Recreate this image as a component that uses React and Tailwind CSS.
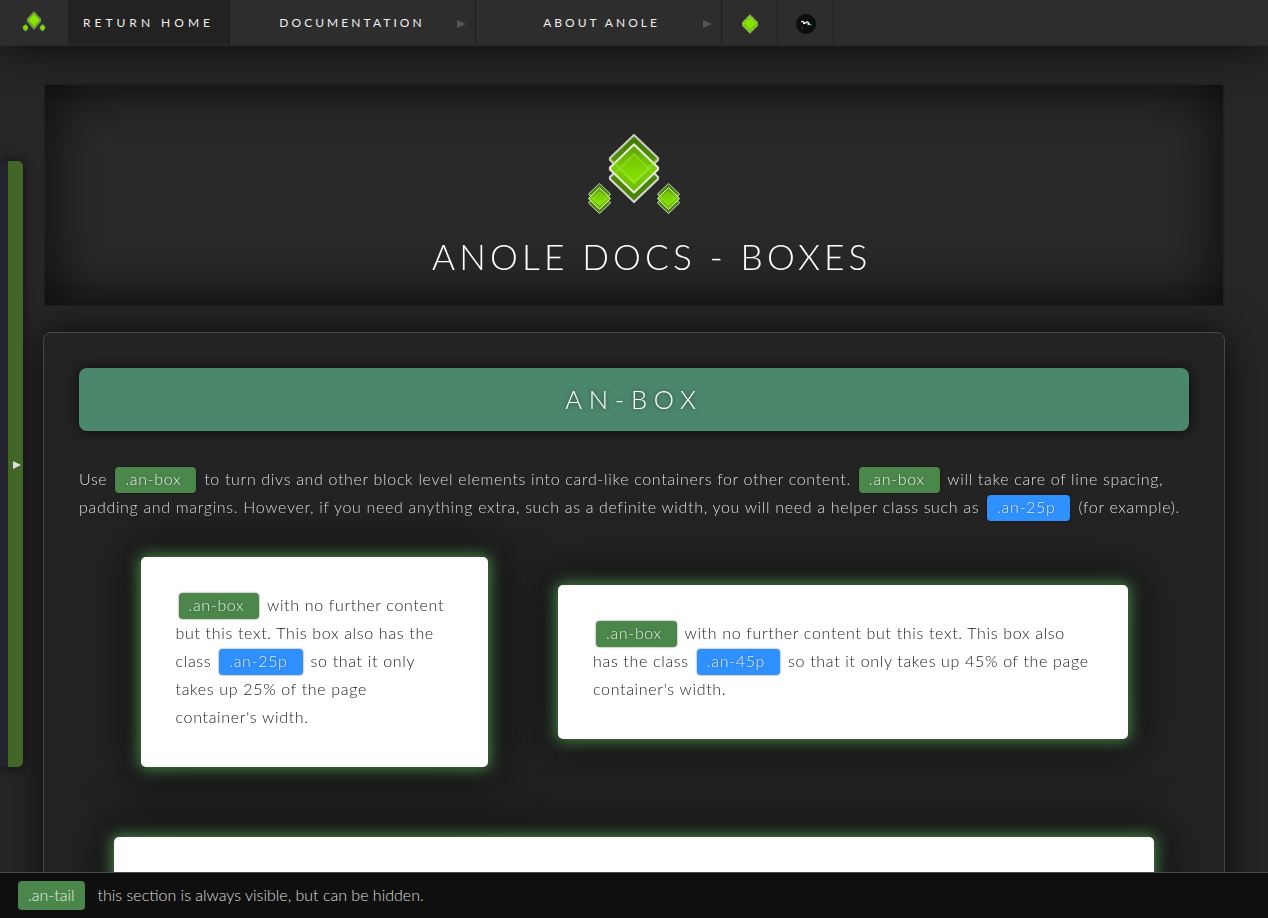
import React from "react";

function Rhombus({ cx = 0, cy, rx, ry, fill, stroke, sw }) {
  return (
    <path
      d={`M${cx} ${cy - ry}L${cx + rx} ${cy - 1}V${cy + 1}L${cx} ${cy + ry}L${cx - rx} ${cy + 1}V${cy - 1}Z`}
      fill={fill}
      stroke={stroke}
      strokeWidth={sw}
      strokeLinejoin="round"
    />
  );
}

function Cluster({ x, y, s, sw }) {
  return (
    <g transform={`translate(${x} ${y}) scale(${s})`}>
      <Rhombus cy={-9.5} rx={24} ry={24} fill="url(#dark)" stroke="#c6cbc0" sw={sw} />
      <Rhombus cy={9.5} rx={24} ry={24} fill="#4a8506" stroke="#d2d5cf" sw={sw} />
      <Rhombus cy={0} rx={24} ry={24} fill="url(#lime)" stroke="#e4efd2" sw={sw} />
      <Rhombus cy={0} rx={15} ry={15} fill="url(#core)" stroke="none" sw={0} />
      <path d="M-23 -9L0 14.5L23 -9" fill="none" stroke="#a6ee48" strokeOpacity="0.45" strokeWidth={sw} />
      <path d="M-19 5L0 -14.5L19 5" fill="none" stroke="#a5ee40" strokeOpacity="0.35" strokeWidth={sw} />
    </g>
  );
}

function Logo({ className }) {
  return (
    <svg className={className} viewBox="0 0 96 84">
      <defs>
        <linearGradient id="dark" x1="0" y1="0" x2="0" y2="1">
          <stop offset="0" stopColor="#3f7606" />
          <stop offset="1" stopColor="#64ad05" />
        </linearGradient>
        <linearGradient id="lime" x1="0" y1="0" x2="0" y2="1">
          <stop offset="0" stopColor="#5a9c0d" />
          <stop offset="0.5" stopColor="#7bd005" />
          <stop offset="1" stopColor="#6dba07" />
        </linearGradient>
        <linearGradient id="core" x1="0" y1="0" x2="0" y2="1">
          <stop offset="0" stopColor="#72c005" />
          <stop offset="1" stopColor="#8ae600" />
        </linearGradient>
      </defs>
      <Cluster x={48} y={36.5} s={1} sw={2.2} />
      <Cluster x={13.5} y={66.5} s={0.45} sw={2.2} />
      <Cluster x={82.5} y={66.5} s={0.45} sw={2.2} />
    </svg>
  );
}

function SmallLogo() {
  return (
    <svg className="h-6 w-6" viewBox="0 0 24 24">
      <path d="M12 1L18.5 8V10.5L12 18L5.5 10.5V8Z" fill="#6fb80c" stroke="#6f8e4c" strokeWidth="1.2" />
      <path d="M12 3.5L16.8 8.5V9.5L12 14.5L7.2 9.5V8.5Z" fill="#8ae500" stroke="#9bdc4a" strokeWidth=".6" strokeDasharray="1 1" />
      <path d="M3.5 13.5L6 15.5V17.7L3.5 20L1 17.7V15.5Z M20.5 13.5L23 15.5V17.7L20.5 20L18 17.7V15.5Z" fill="#80dd08" stroke="#6d9444" strokeWidth=".8" />
    </svg>
  );
}

function Tag({ children, blue }) {
  return (
    <span
      className={
        "relative -top-[1px] mx-[3px] inline-block h-[26px] rounded-[4px] pr-[15px] pl-[10px] align-middle leading-[24px] text-[#e2eee2] shadow-[0_0_2px_rgba(0,0,0,0.6)] [text-shadow:0_0_3px_rgba(0,0,0,0.3)] " +
        (blue ? "bg-[#2f90ff]" : "bg-[#4b874b]")
      }
    >
      {children}
    </span>
  );
}

function Card({ className, children }) {
  return (
    <div
      className={
        "shrink-0 rounded-[5px] bg-white px-[35px] pt-[34px] text-[#222] shadow-[0_0_15px_2px_#4b874b,0_0_50px_10px_rgba(0,0,0,0.6)] " +
        className
      }
    >
      {children}
    </div>
  );
}

function Arrow({ className }) {
  return (
    <svg className={className} viewBox="0 0 9 8" preserveAspectRatio="none">
      <path d="M0 0L9 4L0 8Z" fill="currentColor" />
    </svg>
  );
}

function MenuItem({ children, className }) {
  return (
    <div className={"flex h-[45px] w-[246px] items-center border-r border-[#1c1c1c] " + className}>
      <span className="flex-1 text-center">{children}</span>
      <Arrow className="mt-[2px] mr-[9px] h-2 w-[9px] text-[#555]" />
    </div>
  );
}

export default function App() {
  return (
    <div className="relative flex h-[918px] w-[1268px] flex-col overflow-hidden bg-[#262626] font-[Lato,sans-serif] text-[16px] font-light">
      <header className="z-10 flex h-[46px] shrink-0 border-b border-[#292929] bg-[#2d2d2d] text-[12px] font-normal text-[#eee] shadow-[0_0_45px_rgba(0,0,0,0.75)]">
        <div className="flex h-[45px] w-[68px] items-center justify-center">
          <SmallLogo />
        </div>
        <div className="flex h-[45px] w-[162px] items-center border-r border-[#1d1d1d] bg-[#222] pl-[15px] tracking-[4px] whitespace-nowrap">
          RETURN HOME
        </div>
        <MenuItem className="pl-[17px] tracking-[3.07px]">DOCUMENTATION</MenuItem>
        <MenuItem className="pl-[24px] tracking-[3px]">ABOUT ANOLE</MenuItem>
        <div className="flex h-[45px] w-[56px] items-center justify-center border-r border-[#202020]">
          <svg className="mt-[3px] h-5 w-4" viewBox="0 0 16 20">
            <path d="M8 0L16 8V12L8 20L0 12V8Z" fill="#5b8c21" />
            <path d="M8 1.5L15 8.5V11.5L8 18.5L1 11.5V8.5Z" fill="#71c10a" stroke="#e5f3cf" strokeWidth="1" strokeDasharray="1 1" />
            <path d="M8 3.5L14 9.5L8 15.5L2 9.5Z" fill="#86e500" />
          </svg>
        </div>
        <div className="flex h-[45px] w-[56px] items-center justify-center border-r border-[#202020]">
          <svg className="mt-[3px] h-5 w-5" viewBox="0 0 20 20">
            <circle cx="10" cy="10" r="10" fill="#0d0d0d" />
            <path d="M5 7.8L7 7.5L9 9L7 9.7M9 9.5L11 7.8L13 9L13 11M11.5 9.5L12.5 10.5" fill="none" stroke="#f1f1f1" strokeWidth="1.2" />
            <path d="M14 10h1.4v1.4h-1.4Z" fill="#0cc" />
            <path d="M5.5 12.5L7.5 15" stroke="#4b431b" strokeWidth=".8" />
          </svg>
        </div>
      </header>

      <section className="mx-[45px] mt-[39px] flex h-[220px] shrink-0 flex-col items-center bg-[#292929] shadow-[inset_0_0_60px_rgba(0,0,0,0.8),0_0_2px_#1a1a1a]">
        <Logo className="mt-[47px] h-[84px] w-[96px]" />
        <h1 className="mt-[18px] pl-[36px] text-[35.2px] leading-[44px] font-light tracking-[4.15px] text-white will-change-transform">
          ANOLE DOCS - BOXES
        </h1>
      </section>

      <main className="mx-[43px] mt-[27px] h-[900px] shrink-0 rounded-[8px] border border-[#484848] bg-[#232323] p-[35px] shadow-[0_0_40px_rgba(0,0,0,0.75)] will-change-transform">
        <h2 className="h-[63px] rounded-[8px] bg-[#4b876b] text-center text-[25.6px] leading-[63px] font-light tracking-[6.7px] text-white shadow-[0_0_15px_rgba(0,0,0,0.7)] [text-shadow:0_0_5px_rgba(0,0,0,0.5)]">
          AN-BOX
        </h2>
        <div className="mt-[34px] text-[16px] leading-[28px] tracking-[0.67px] text-[#ddd]">
          <div className="h-[28px] whitespace-nowrap">
            Use <Tag>.an-box</Tag> to turn divs and other block level elements into card-like containers for other content. <Tag>.an-box</Tag> will take care of line spacing,
          </div>
          <div className="h-[28px] whitespace-nowrap">
            padding and margins. However, if you need anything extra, such as a definite width, you will need a helper class such as <Tag blue>.an-25p</Tag> (for example).
          </div>
        </div>
        <div className="mt-[36px] ml-[62px] flex items-center gap-[70px] leading-[28px] tracking-[0.67px]">
          <Card className="h-[210px] w-[347px]">
            <div className="-ml-[0.5px] h-[28px] whitespace-nowrap"><Tag>.an-box</Tag> with no further content</div>
            <div className="-ml-[0.5px] h-[28px] whitespace-nowrap">but this text. This box also has the</div>
            <div className="-ml-[0.5px] h-[28px] whitespace-nowrap">class <Tag blue>.an-25p</Tag> so that it only</div>
            <div className="-ml-[0.5px] h-[28px] whitespace-nowrap">takes up 25% of the page</div>
            <div className="-ml-[0.5px] h-[28px] whitespace-nowrap">container's width.</div>
          </Card>
          <Card className="h-[154px] w-[570px]">
            <div className="h-[28px] whitespace-nowrap"><Tag>.an-box</Tag> with no further content but this text. This box also</div>
            <div className="h-[28px] whitespace-nowrap">has the class <Tag blue>.an-45p</Tag> so that it only takes up 45% of the page</div>
            <div className="h-[28px] whitespace-nowrap">container's width.</div>
          </Card>
        </div>
        <Card className="mt-[70px] ml-[35px] h-[210px] w-[1040px]" />
      </main>

      <aside className="absolute top-[161px] left-0 z-10 flex h-[606px] w-[23px] rounded-r-[5px] bg-[#23232d] shadow-[0_0_12px_rgba(0,0,0,0.6)]">
        <div className="ml-[8px] flex w-[15px] items-center justify-center rounded-r-[5px] bg-[#426628]">
          <Arrow className="mt-[2px] ml-[3px] h-[8px] w-[8px] text-[#ddd]" />
        </div>
      </aside>

      <footer className="absolute bottom-0 left-0 z-20 flex h-[46px] w-full items-center border-t border-[#4a4a4a] bg-[#0f0f0f] pl-[18px] text-[#ddd]">
        <span className="flex h-[29px] items-center rounded-[4px] bg-[#4b874b] px-[10px] pb-[2px] text-[#e6f0e6]">.an-tail</span>
        <span className="ml-[13px] pb-[2px]">this section is always visible, but can be hidden.</span>
      </footer>
    </div>
  );
}
